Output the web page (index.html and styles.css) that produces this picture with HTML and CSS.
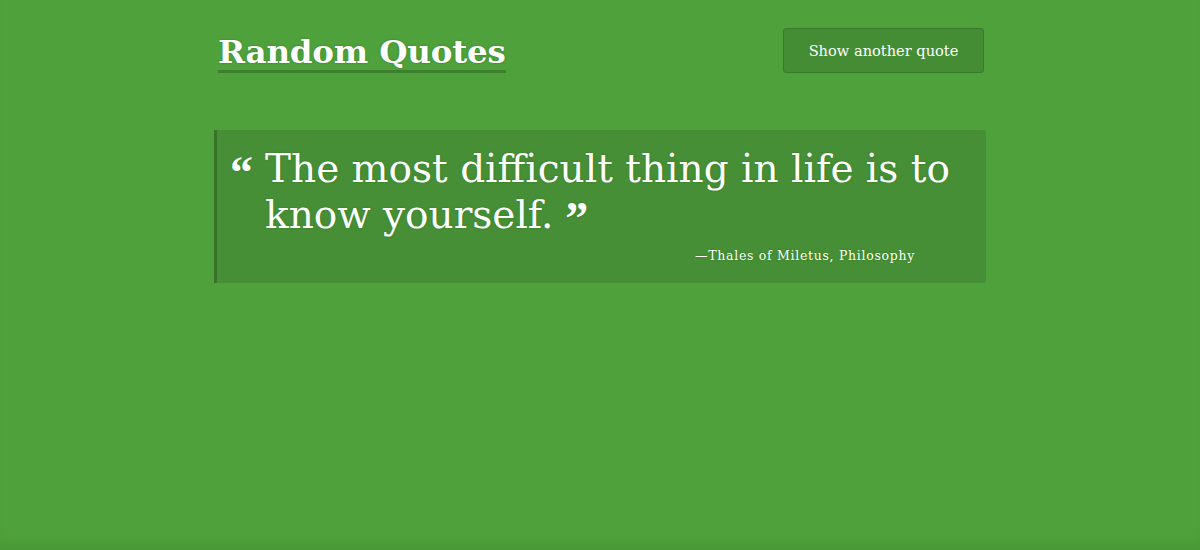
FILE: index.html
```html
<!DOCTYPE html>
<html>
<head>
<meta charset="utf-8">
<link rel="stylesheet" href="styles.css">
</head>
<body>
<div class="page">
  <header class="header">
    <h1 class="title">Random Quotes</h1>
    <button class="btn">Show another quote</button>
  </header>
  <blockquote class="quote">
    <p class="quote-text"><span class="mark open">“</span>The most difficult thing in life is to know yourself.<span class="mark close">”</span></p>
    <p class="author">—Thales of Miletus, Philosophy</p>
  </blockquote>
</div>
</body>
</html>
```
FILE: styles.css
```css
html, body {
  margin: 0;
  height: 100%;
}
body {
  background: #4fa13c;
  font-family: "DejaVu Serif", "Liberation Serif", serif;
  color: #fff;
  box-shadow: inset 0 -12px 14px -10px rgba(0,0,0,0.12);
}
.page {
  width: 772px;
  margin: 0 auto;
  padding-top: 28px;
}
.header {
  display: flex;
  justify-content: space-between;
  align-items: flex-start;
  padding-left: 4px;
  padding-right: 2px;
}
.title {
  margin: 6px 0 0;
  font-size: 32.5px;
  font-weight: bold;
  line-height: 35px;
  border-bottom: 3px solid #3d7f2e;
  padding-bottom: 1px;
  text-shadow: 0 0 2px #2f7a1f;
  letter-spacing: -0.2px;
}
.btn {
  width: 201px;
  height: 45px;
  background: #448d34;
  border: 1px solid #3a7a2c;
  border-radius: 3px;
  color: #fff;
  font-family: "DejaVu Serif", "Liberation Serif", serif;
  font-size: 14.6px;
  padding: 0;
}
.quote {
  margin: 57px 0 0;
  background: #478f36;
  border-left: 3px solid #387229;
  border-radius: 0 3px 3px 0;
  padding: 16px 20px 20px 15px;
}
.quote-text {
  margin: 0;
  padding-left: 33px;
  position: relative;
  font-size: 39px;
  line-height: 46px;
  text-shadow: 0 0 2px #2a7a1a;
}
.mark {
  font-family: "Liberation Serif", serif;
  font-weight: bold;
  font-size: 46px;
  line-height: 1;
  vertical-align: top;
}
.open {
  position: absolute;
  left: -2px;
  top: 4px;
}
.close {
  position: relative;
  top: 4px;
  margin-left: 12px;
}
.author {
  margin: 10px 0 0;
  text-align: right;
  padding-right: 51px;
  font-size: 12.5px;
  letter-spacing: 0.7px;
  text-shadow: 0 0 2px #2a7a1a;
}
```
